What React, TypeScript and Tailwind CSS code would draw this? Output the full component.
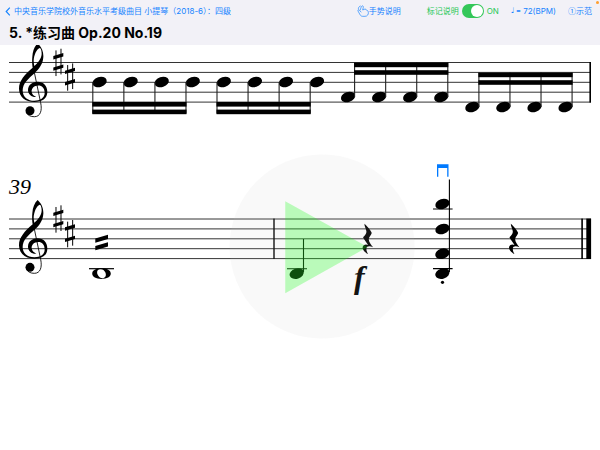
import { useState } from 'react';

const STAFF_GAP = 10;
const NOTE_STEP = 31;

type Beamed = { x: number; y: number; stem: 'up' | 'down'; beams: [number, number] };

const BEAMED_GROUPS: Beamed[] = [
  { x: 99.6, y: 82, stem: 'down', beams: [102, 109.6] },
  { x: 223.8, y: 82, stem: 'down', beams: [102, 109.6] },
  { x: 348, y: 97, stem: 'up', beams: [62.6, 70.2] },
  { x: 472.3, y: 107, stem: 'up', beams: [72.6, 80.2] },
];

function Staff({ y }: { y: number }) {
  return (
    <g stroke="#333" strokeWidth="1">
      {[0, 1, 2, 3, 4].map(i => (
        <line key={i} x1="9" x2="591" y1={y + i * STAFF_GAP * 0.99} y2={y + i * STAFF_GAP * 0.99} />
      ))}
    </g>
  );
}

// Clef and sharps share one drawing; its units are a third of the score's.
function Signature({ y }: { y: number }) {
  return (
    <g transform={`translate(0 ${y}) scale(0.3333)`}>
      <path
        fillRule="evenodd"
        d="M113 90C123 99 131 113 130 131C129 152 117 167 105 178C85 196 68 210 68 231C68 251 84 262 103 262C120 262 134 254 134 239C134 224 126 216 115 216C101 216 94 226 95 235C96 243 101 247 109 251C95 252 84 243 84 230C84 214 98 205 113 205C130 205 142 216 142 236C142 256 126 266 103 266C76 266 57 250 57 226C57 202 74 184 98 163C96 150 96 142 97 130C98 112 104 98 113 90ZM119 104C109 108 102 126 101 142C101 148 102 153 103 158C114 148 124 137 125 122C125 112 123 105 119 104Z"
      />
      <path d="M102 172L122 268C127 292 121 310 103 310C92 310 83 306 79 297" fill="none" stroke="#000" strokeWidth="2.6" />
      <circle cx="90" cy="292" r="13.5" />
      <Sharp x={160} y={106} />
      <Sharp x={195} y={150} />
    </g>
  );
}

function Sharp({ x, y }: { x: number; y: number }) {
  return (
    <g transform={`translate(${x} ${y})`}>
      <path d="M8 5V82M23 0V77" stroke="#000" strokeWidth="3" />
      <path d="M0 22L30 13V23L0 32ZM0 56L30 47V57L0 66Z" />
    </g>
  );
}

function Head({ x, y }: { x: number; y: number }) {
  return <ellipse cx={x} cy={y} rx="7.3" ry="5.1" transform={`rotate(-18 ${x} ${y})`} />;
}

function BeamedGroup({ x, y, stem, beams }: Beamed) {
  const side = stem === 'up' ? 6.6 : -6.8;
  const end = stem === 'up' ? beams[0] : beams[1] + 4;
  return (
    <g>
      {[0, 1, 2, 3].map(i => {
        const nx = x + i * NOTE_STEP * 1.002;
        return (
          <g key={i}>
            <Head x={nx} y={y} />
            <line x1={nx + side} x2={nx + side} y1={y} y2={end} stroke="#222" strokeWidth="1.1" />
          </g>
        );
      })}
      {beams.map(by => (
        <rect key={by} x={x + side - 0.5} y={by} width={NOTE_STEP * 3 + 1.2} height="4.6" />
      ))}
    </g>
  );
}

function QuarterRest({ x }: { x: number }) {
  return (
    <path
      transform={`translate(${x} 150) scale(0.3333)`}
      d="M3 221C12 229 23 241 25 249C23 256 16 262 16 268C17 277 22 284 29 292C19 287 9 288 9 296C9 302 11 307 14 312C4 307 -4 298 -2 290C1 283 8 282 14 285C8 277 2 268 -1 262C4 257 10 252 9 244C8 236 3 229 3 221Z"
    />
  );
}

function Score() {
  return (
    <svg viewBox="0 45 600 405" className="block w-full" role="img" aria-label="Sheet music">
      <Staff y={62.5} />
      <Signature y={13.4} />
      {BEAMED_GROUPS.map(g => (
        <BeamedGroup key={g.x} {...g} />
      ))}
      <rect x="589.4" y="62" width="1.6" height="40.5" />

      <text x="9" y="194" fontSize="22" fontStyle="italic" fontFamily="Liberation Serif, serif">39</text>
      <Staff y={219} />
      <Signature y={170} />

      {/* whole note with tremolo */}
      <path d="M95.3 238.4L108 234.7V239.1L95.3 242.8ZM95.3 245.9L108 242.2V246.6L95.3 250.3Z" />
      <path d="M89 268.7H114" stroke="#000" strokeWidth="1.2" />
      <path
        fillRule="evenodd"
        d="M101.5 268.2C107 268.2 110.8 270.2 110.8 273.6C110.8 277 107 279 101.5 279C96 279 92.2 277 92.2 273.6C92.2 270.2 96 268.2 101.5 268.2ZM100 269C97.2 269.6 96.6 272 97.6 274.6C98.6 277.3 101.2 278.7 103.2 278.2C105.9 277.6 106.4 275.2 105.4 272.6C104.4 270 102 268.5 100 269Z"
      />
      <rect x="273.3" y="218.6" width="1.4" height="40.4" />

      <Head x={296.7} y={273.6} />
      <path d="M287 268.7H307M303.5 239V272" stroke="#000" strokeWidth="1.1" />
      <QuarterRest x={363.4} />
      <text x="354" y="288" fontSize="32" fontStyle="italic" fontWeight="bold" fontFamily="Liberation Serif, serif">f</text>

      {/* four-note chord */}
      {[204, 229, 253.7, 273.6].map(y => (
        <Head key={y} x={442.4} y={y} />
      ))}
      <path d="M433 209H452.6M433 268.6H452.6M449.4 179.5V272" stroke="#000" strokeWidth="1.1" />
      <circle cx="442.5" cy="282.3" r="1.6" />
      <path d="M437 164.3H448.5V176.8H447.2V168H438.3V176.8H437Z" fill="#007aff" />

      <QuarterRest x={509.8} />
      <rect x="581.3" y="218.6" width="1.6" height="40.4" />
      <rect x="586.3" y="218.6" width="4.8" height="40.4" />
    </svg>
  );
}

function HandIcon() {
  return (
    <svg viewBox="0 0 36 36" className="h-3 w-3" fill="none" stroke="currentColor" strokeWidth="2" strokeLinejoin="round" strokeLinecap="round">
      <path d="M10 14L13 5C15 1 20 2 19 7L17 15L24 12C27 12 28 14 29 16C32 16 34 19 34 22C35 28 31 34 24 34H17C13 34 11 32 9 29L3 18C2 15 5 13 7 15L12 21" />
      <path d="M4 12C4 8 6 4 10 3" />
    </svg>
  );
}

export default function App() {
  const [marks, setMarks] = useState(true);

  return (
    <div className="min-h-screen bg-white text-black font-['Inter','Noto_Sans_CJK_SC',sans-serif]">
      <header className="relative bg-[#f2f1f7]">
        <nav className="flex h-[22px] items-center justify-between pl-[5px] pr-2 text-[8px] leading-[12px] text-[#1683ff]">
          <a href="#list" className="flex items-center gap-[3px] whitespace-nowrap">
            <svg viewBox="0 0 6 10" className="h-[9px] w-[6px]" fill="none" stroke="currentColor" strokeWidth="1.3">
              <path d="M5 .8L1 5L5 9.2" />
            </svg>
            中央音乐学院校外音乐水平考级曲目 小提琴（2018-6）：四级
          </a>
          <div className="flex items-center whitespace-nowrap">
            <button type="button" className="mr-[26px] flex items-center">
              <HandIcon />
              手势说明
            </button>
            <label className="mr-3 flex items-center gap-[3px] text-[#22c755]">
              标记说明
              <input
                type="checkbox"
                role="switch"
                checked={marks}
                onChange={e => setMarks(e.target.checked)}
                className="peer sr-only"
              />
              <span className="flex h-[14px] w-[22px] justify-start rounded-full bg-gray-300 p-px peer-checked:justify-end peer-checked:bg-[#34c759]">
                <span className="h-3 w-3 rounded-full bg-white" />
              </span>
              <span>{marks ? 'ON' : 'OFF'}</span>
            </label>
            <button type="button" className="mr-3 flex items-center gap-px">
              <span className="font-['DejaVu_Sans',sans-serif]">♩</span>
              <span>= 72(BPM)</span>
            </button>
            <button type="button" className="font-['Noto_Sans_CJK_SC',sans-serif]">①示范</button>
          </div>
        </nav>
        <h1 className="h-[23px] pl-[9px] text-[14px] leading-[22px] font-bold">5. *练习曲 Op.20 No.19</h1>
        <span className="absolute right-[1px] top-[1px] h-[3px] w-[3px] rounded-full bg-[#ff9f2e]" />
      </header>

      <main className="relative">
        <Score />
        <button
          type="button"
          aria-label="Play"
          className="absolute left-[53.7%] top-[49.8%] aspect-square w-[30.8%] -translate-x-1/2 -translate-y-1/2 rounded-full bg-[#c8c8c8]/10"
        >
          <svg viewBox="0 0 186 186" className="block w-full">
            <path d="M56 47V139.5L139 93Z" fill="#00ff00" fillOpacity="0.25" />
          </svg>
        </button>
      </main>
    </div>
  );
}
